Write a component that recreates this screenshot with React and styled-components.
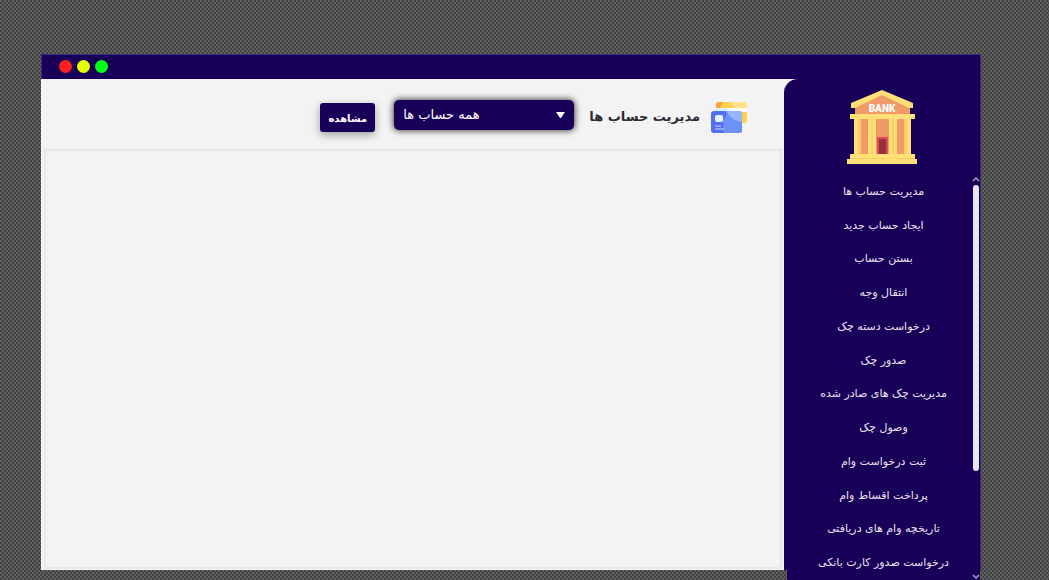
import React from "react";
import styled, { createGlobalStyle } from "styled-components";

const navy = "#180058";
const paper = "#f3f3f3";

const GlobalStyle = createGlobalStyle`
  *, *::before, *::after { box-sizing: border-box; }
  body {
    margin: 0;
    font-family: "DejaVu Sans", sans-serif;
    background: repeating-conic-gradient(#424242 0 25%, #606060 0 50%) 0 0 / 4px 4px;
  }
`;

const Page = styled.div`
  display: flex;
  height: 100vh;
  padding: 54px 68px 10px 41px;
`;

const Window = styled.div`
  flex: 1;
  min-width: 0;
  display: flex;
  flex-direction: column;
`;

const TitleBar = styled.header`
  display: flex;
  align-items: center;
  gap: 5px;
  flex: 0 0 25px;
  padding: 0 0 2px 17px;
  background: ${navy};
  border: 1px solid #3b2a80;
  border-bottom: 0;
`;

const WindowButton = styled.button`
  width: 13px;
  height: 13px;
  padding: 0;
  border: 0;
  border-radius: 50%;
  background: ${(p) => p.$color};
`;

const Body = styled.div`
  flex: 1;
  min-height: 0;
  display: flex;
  background: ${paper};
`;

const Main = styled.main`
  flex: 1;
  min-width: 0;
  display: flex;
  flex-direction: column;
  padding: 0 2px 1px 3px;
`;

const Toolbar = styled.div`
  display: flex;
  align-items: center;
  height: 70px;
  padding: 6px 35px 0 0;
`;

const Title = styled.h1`
  margin: 0 11px 0 15px;
  font-size: 13px;
  line-height: 24px;
  color: #2b2b33;
  white-space: nowrap;
`;

const SelectBox = styled.div`
  position: relative;
  width: 180px;
  margin-left: 19px;
  margin-bottom: 4px;
`;

const Select = styled.select`
  appearance: none;
  display: block;
  width: 100%;
  height: 30px;
  padding: 0 9px 2px;
  direction: ltr;
  border: 0;
  border-radius: 5px;
  background: ${navy};
  box-shadow: 0 0 6px 1px rgba(0, 0, 0, 0.7);
  color: #fff;
  font: 13px "DejaVu Sans", sans-serif;
`;

const Caret = styled.svg`
  position: absolute;
  right: 9px;
  top: 12px;
  pointer-events: none;
`;

const ViewButton = styled.button`
  width: 55px;
  height: 29px;
  padding: 2px 0 0;
  border: 0;
  border-radius: 3px;
  background: ${navy};
  box-shadow: 0 3px 8px rgba(0, 0, 0, 0.35);
  color: #fff;
  font: bold 10px "DejaVu Sans", sans-serif;
`;

const Content = styled.section`
  flex: 1;
  border: 2px solid #e7e7e7;
`;

const Sidebar = styled.aside`
  flex: 0 0 197px;
  display: flex;
  flex-direction: column;
  border-right: 1px solid #3b2a80;
  border-radius: 14px 0 0 0;
  background: ${navy};
`;

const Logo = styled.svg`
  display: block;
  flex: none;
  margin: 11px 0 11px 63px;
`;

const MenuArea = styled.div`
  flex: 1;
  min-height: 0;
  display: flex;
  margin: 0 0 -10px 3px;
  background: ${navy};
`;

const Menu = styled.nav`
  flex: 1;
  display: grid;
  grid-auto-rows: 1fr;
`;

const MenuLink = styled.a`
  display: flex;
  align-items: center;
  justify-content: center;
  padding-left: 8px;
  color: #e8e4f0;
  font-size: 11px;
  line-height: 20px;
  text-decoration: none;
  white-space: nowrap;
`;

const ScrollRail = styled.div`
  display: flex;
  flex-direction: column;
  align-items: center;
  flex: 0 0 8px;
  padding-top: 1px;
  color: #a9a2bf;
`;

const Track = styled.div`
  flex: 1;
  width: 6px;
  margin: 3px 0;
`;

const Thumb = styled.div`
  height: 74%;
  border-radius: 3px;
  background: #e6e4ec;
`;

const items = [
  "مدیریت حساب ها",
  "ایجاد حساب جدید",
  "بستن حساب",
  "انتقال وجه",
  "درخواست دسته چک",
  "صدور چک",
  "مدیریت چک های صادر شده",
  "وصول چک",
  "ثبت درخواست وام",
  "پرداخت اقساط وام",
  "تاریخچه وام های دریافتی",
  "درخواست صدور کارت بانکی",
];

function Chevron({ up }) {
  return (
    <svg width="8" height="6" viewBox="0 0 8 6" fill="none" stroke="currentColor" strokeWidth="1.5" aria-hidden="true">
      <path d={up ? "M1 5 4 2l3 3" : "M1 1l3 3 3-3"} />
    </svg>
  );
}

function BankLogo() {
  return (
    <Logo width="70" height="74" viewBox="0 0 70 74" role="img" aria-label="BANK">
      <path d="M8 13h55v53H8z" fill="#f09a68" />
      <path d="M35 3 63 15v4H8v-4z" fill="#f09a68" />
      <path d="M35 0 66 13v5h-4L35 5 8 18H4v-5z" fill="#ffdf77" />
      <path d="M3 24h65v5H3z" fill="#ffdf77" />
      <path d="M7 29h7v35H7zM21 29h8v35h-8zM42 29h8v35h-8zM57 29h7v35h-7z" fill="#ffdf77" />
      <path d="M11 29h3v35h-3zM24 29h2v35h-2zM45 29h2v35h-2zM57 29h3v35h-3z" fill="#fbcf68" />
      <path d="M30 47h11v17H30z" fill="#e04a55" />
      <path d="M32 49h7v15h-7z" fill="#963039" />
      <path d="M3 64h65v5H3zM0 69h70v5H0z" fill="#ffdf77" />
      <path d="M3 68h65v1H3z" fill="#fbcf68" />
      <text x="35" y="22" textAnchor="middle" fill="#fff" fontFamily="Roboto, sans-serif" fontWeight="900" fontSize="10">BANK</text>
    </Logo>
  );
}

function CardsIcon() {
  return (
    <svg width="36" height="31" viewBox="0 0 36 31" aria-hidden="true">
      <rect x="5" y="0" width="31" height="21" rx="3" fill="#ffcf4f" />
      <path d="M8 0h4l-3 6H5V3a3 3 0 0 1 3-3z" fill="#ff9f3a" />
      <path d="M20 0h13a3 3 0 0 1 3 3v3H24q-3-2-4-6z" fill="#ffe38a" />
      <path d="M5 6h31v4H5z" fill="#fff" />
      <path d="M5 6h11l4 4H5z" fill="#d9efff" />
      <rect x="0" y="9" width="31" height="22" rx="3" fill="#5470f2" />
      <path d="M15 9h13a3 3 0 0 1 3 3v16a3 3 0 0 1-3 3H13c-3-6 2-8-2-13 5-2 4-5 4-9z" fill="#6d92f7" />
      <path d="M16 9h12a3 3 0 0 1 3 3v8c-8-1-13-5-15-11z" fill="#93b6f8" />
      <rect x="4" y="13" width="8" height="7" rx="2" fill="#e9f4ff" />
      <path d="M4 24h6M4 27h9" stroke="#c9dcff" />
    </svg>
  );
}

export default function App() {
  return (
    <>
      <GlobalStyle />
      <Page>
        <Window>
          <TitleBar>
            <WindowButton $color="#ff2020" aria-label="بستن" />
            <WindowButton $color="#e6ff00" aria-label="کوچک کردن" />
            <WindowButton $color="#00ff16" aria-label="بزرگ کردن" />
          </TitleBar>
          <Body>
            <Main>
              <Toolbar dir="rtl">
                <CardsIcon />
                <Title>مدیریت حساب ها</Title>
                <SelectBox>
                  <Select aria-label="حساب">
                    <option>همه حساب ها</option>
                  </Select>
                  <Caret width="9" height="6" viewBox="0 0 9 6" aria-hidden="true">
                    <path d="M0 0h9L5 6H4z" fill="#fff" />
                  </Caret>
                </SelectBox>
                <ViewButton>مشاهده</ViewButton>
              </Toolbar>
              <Content />
            </Main>
            <Sidebar>
              <BankLogo />
              <MenuArea>
                <Menu dir="rtl">
                  {items.map((label) => (
                    <MenuLink key={label} href="#">{label}</MenuLink>
                  ))}
                </Menu>
                <ScrollRail>
                  <Chevron up />
                  <Track><Thumb /></Track>
                  <Chevron />
                </ScrollRail>
              </MenuArea>
            </Sidebar>
          </Body>
        </Window>
      </Page>
    </>
  );
}
